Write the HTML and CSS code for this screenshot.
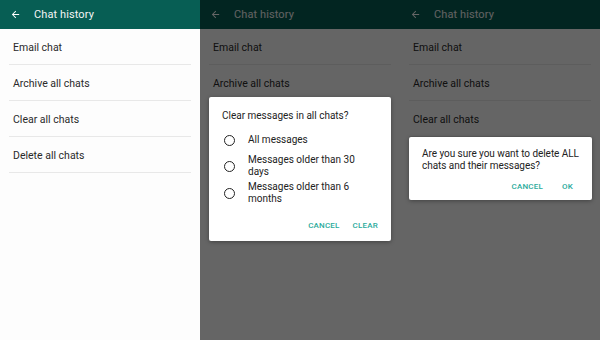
FILE: index.html
```html
<!DOCTYPE html>
<html>
<head>
<meta charset="utf-8">
<link rel="stylesheet" href="styles.css">
</head>
<body>
<div class="screens">
  <section class="screen">
    <header class="bar">
      <svg class="back" viewBox="0 0 24 24"><path d="M20 11H7.83l5.59-5.59L12 4l-8 8 8 8 1.41-1.41L7.83 13H20v-2z"/></svg>
      <span class="title">Chat history</span>
    </header>
    <ul class="list">
      <li>Email chat</li>
      <li>Archive all chats</li>
      <li>Clear all chats</li>
      <li>Delete all chats</li>
    </ul>
  </section>

  <section class="screen">
    <header class="bar">
      <svg class="back" viewBox="0 0 24 24"><path d="M20 11H7.83l5.59-5.59L12 4l-8 8 8 8 1.41-1.41L7.83 13H20v-2z"/></svg>
      <span class="title">Chat history</span>
    </header>
    <ul class="list">
      <li>Email chat</li>
      <li>Archive all chats</li>
      <li>Clear all chats</li>
      <li>Delete all chats</li>
    </ul>
    <div class="scrim"></div>
    <div class="dialog dialog-clear">
      <div class="d-title">Clear messages in all chats?</div>
      <div class="options">
        <div class="opt"><span class="radio"></span><span class="opt-label">All messages</span></div>
        <div class="opt"><span class="radio"></span><span class="opt-label">Messages older than 30 days</span></div>
        <div class="opt"><span class="radio"></span><span class="opt-label">Messages older than 6 months</span></div>
      </div>
      <div class="actions">
        <span class="btn">CANCEL</span>
        <span class="btn">CLEAR</span>
      </div>
    </div>
  </section>

  <section class="screen">
    <header class="bar">
      <svg class="back" viewBox="0 0 24 24"><path d="M20 11H7.83l5.59-5.59L12 4l-8 8 8 8 1.41-1.41L7.83 13H20v-2z"/></svg>
      <span class="title">Chat history</span>
    </header>
    <ul class="list">
      <li>Email chat</li>
      <li>Archive all chats</li>
      <li>Clear all chats</li>
      <li>Delete all chats</li>
    </ul>
    <div class="scrim"></div>
    <div class="dialog dialog-delete">
      <div class="d-text">Are you sure you want to delete ALL chats and their messages?</div>
      <div class="actions">
        <span class="btn">CANCEL</span>
        <span class="btn">OK</span>
      </div>
    </div>
  </section>
</div>
</body>
</html>
```

FILE: styles.css
```css
* { box-sizing: border-box; }
html, body { margin: 0; padding: 0; }
body {
  width: 600px;
  height: 340px;
  overflow: hidden;
  font-family: Roboto, "Liberation Sans", Arial, sans-serif;
  background: #fdfdfd;
}
.screens {
  display: flex;
  width: 600px;
  height: 340px;
}
.screen {
  position: relative;
  width: 200px;
  height: 340px;
  background: #fdfdfd;
  overflow: hidden;
}
.bar {
  height: 29px;
  background: #075e54;
  display: flex;
  align-items: center;
  padding-left: 10px;
  gap: 13px;
}
.back {
  width: 11px;
  height: 11px;
  fill: #ffffff;
}
.title {
  color: #f4f4f4;
  font-size: 11px;
  letter-spacing: 0.1px;
}
.list {
  list-style: none;
  margin: 0;
  padding: 0 9px;
}
.list li {
  height: 36px;
  display: flex;
  align-items: center;
  padding-left: 4px;
  padding-top: 1px;
  font-size: 10.5px;
  color: #2a2a2a;
  border-bottom: 1px solid #e8e8e8;
}
.scrim {
  position: absolute;
  inset: 0;
  background: rgba(0, 0, 0, 0.6);
}
.dialog {
  position: absolute;
  background: #ffffff;
  border-radius: 2px;
  box-shadow: 0 1px 4px rgba(0, 0, 0, 0.35);
  color: #222;
}
.dialog-clear {
  left: 9px;
  top: 97px;
  width: 182px;
  height: 144px;
  padding: 12px 13px 0 13px;
}
.d-title {
  font-size: 10px;
  line-height: 13px;
}
.options {
  margin-top: 6px;
  display: flex;
  flex-direction: column;
  gap: 2px;
}
.opt {
  display: flex;
  align-items: center;
  gap: 13px;
  min-height: 24px;
}
.opt + .opt + .opt {
  margin-top: 1px;
}
.radio {
  flex: none;
  width: 11px;
  height: 11px;
  margin-left: 2px;
  border: 1.6px solid #222;
  border-radius: 50%;
}
.opt-label {
  font-size: 10px;
  line-height: 12px;
  width: 120px;
}
.actions {
  display: flex;
  justify-content: flex-end;
  gap: 13px;
}
.dialog-clear .actions {
  margin-top: 16px;
}
.btn {
  font-size: 8px;
  line-height: 10px;
  font-weight: 500;
  letter-spacing: 0.2px;
  color: #2bab9c;
}
.dialog-delete {
  left: 9px;
  top: 137px;
  width: 183px;
  height: 63px;
  padding: 11px 8px 0 13px;
}
.d-text {
  font-size: 10px;
  line-height: 12px;
  letter-spacing: -0.05px;
}
.dialog-delete .actions {
  margin-top: 10px;
  padding-right: 11px;
  gap: 19px;
}
```
